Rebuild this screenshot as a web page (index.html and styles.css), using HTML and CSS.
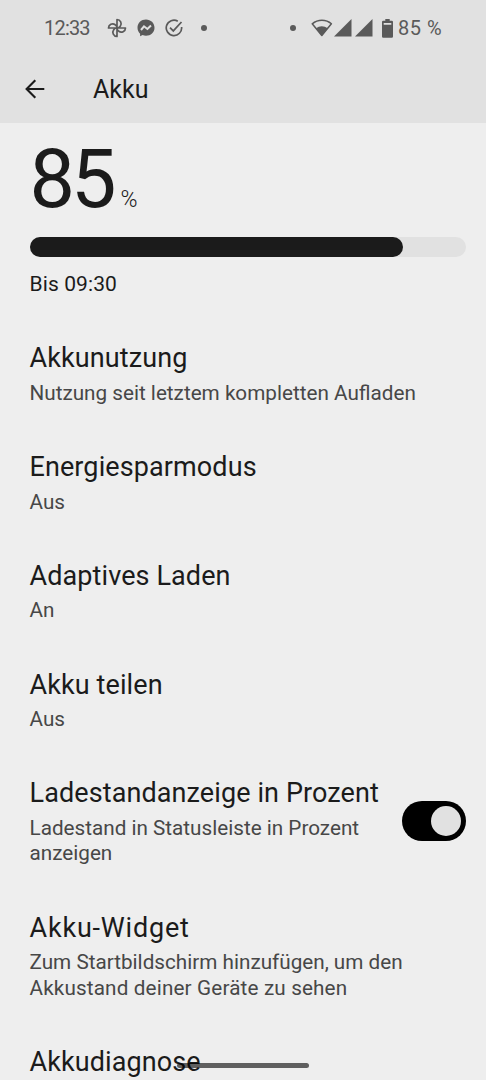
FILE: index.html
```html
<!DOCTYPE html>
<html lang="de">
<head>
  <meta charset="UTF-8">
  <meta name="viewport" content="width=device-width, initial-scale=1.0">
  <title>Akku</title>
  <link rel="stylesheet" href="styles.css">
</head>
<body>

<header class="top">
  <div class="statusbar">
    <span class="clock">12:33</span>
    <div class="notifications">
      <!-- Fotos -->
      <svg width="20" height="20" viewBox="0 0 20 20" fill="none" stroke="#5a5a5a" stroke-width="1.7" stroke-linejoin="round">
        <path d="M10 10V1.500A4.200 4.200 0 0 1 13.300 8.200Q12.300 10 10 10M10 10H18.500A4.200 4.200 0 0 1 11.800 13.300Q10 12.300 10 10M10 10V18.500A4.200 4.200 0 0 1 6.700 11.800Q7.700 10 10 10M10 10H1.500A4.200 4.200 0 0 1 8.200 6.700Q10 7.700 10 10"/>
      </svg>
      <!-- Messenger -->
      <svg width="18" height="18" viewBox="0 0 18 18">
        <path fill="#5a5a5a" d="M9 .5C4.200.5.500 4 .500 8.700c0 2.400 1 4.500 2.600 6v2.500l2.500-1.100c1 .4 2.200.600 3.400.600 4.800 0 8.500-3.400 8.500-8S13.800.5 9 .5z"/>
        <path fill="none" stroke="#e1e1e1" stroke-width="2" d="M4 11l3-3.700 3.400 2.700L14 6.500"/>
      </svg>
      <!-- Aufgaben -->
      <svg width="18" height="18" viewBox="0 0 18 18" fill="none" stroke="#5a5a5a" stroke-width="1.7">
        <path d="M12.800 2.200A7.700 7.700 0 1 0 16.600 8"/>
        <path d="M5 8.600l3.300 3.300L16.500 3"/>
      </svg>
    </div>
    <span class="dot dot-left"></span>
    <span class="dot dot-right"></span>
    <div class="signals">
      <svg class="wifi" width="22" height="18" viewBox="0 0 22 18">
        <path fill="none" stroke="#5a5a5a" stroke-width="1.500" stroke-linejoin="round" d="M1.200 4.800C7 .100 15 .100 20.400 4.800L10.800 16.500z"/>
        <path fill="#5a5a5a" d="M5 9.300C8.500 6.500 13 6.500 16.700 9.300L10.800 16.900z"/>
      </svg>
      <svg width="18" height="18" viewBox="0 0 18 18"><path fill="#5a5a5a" d="M0 17.500L17.500 0v17.500z"/></svg>
      <svg class="sim2" width="18" height="18" viewBox="0 0 18 18"><path fill="#5a5a5a" d="M0 17.500L17.500 0v17.500z"/></svg>
      <svg class="cell" width="11" height="19" viewBox="0 0 11 19">
        <path fill="#5a5a5a" fill-rule="evenodd" d="M3.300 0h4.400v1.800h2.100q1.200 0 1.200 1.200v14.500q0 1.200-1.200 1.200H1.200Q0 18.700 0 17.500V3q0-1.200 1.200-1.200h2.100zM1.700 4v1.800h7.600V4z"/>
      </svg>
    </div>
    <span class="level">85 %</span>
  </div>

  <div class="toolbar">
    <svg class="back" width="20" height="20" viewBox="0 0 20 20" fill="none" stroke="#1b1b1b" stroke-width="2.100">
      <path d="M10.300 1.200L1.600 10l8.700 8.800M1.800 10H19.300"/>
    </svg>
    <h1>Akku</h1>
  </div>
</header>

<main>
  <section class="battery">
    <div class="percent"><span class="number">85</span><span class="unit">%</span></div>
    <div class="bar"><div class="fill" style="width:85.5%"></div></div>
    <p class="until">Bis 09:30</p>
  </section>

  <section class="prefs">
    <div class="pref">
      <h2>Akkunutzung</h2>
      <p>Nutzung seit letztem kompletten Aufladen</p>
    </div>
    <div class="pref">
      <h2>Energiesparmodus</h2>
      <p>Aus</p>
    </div>
    <div class="pref">
      <h2>Adaptives Laden</h2>
      <p>An</p>
    </div>
    <div class="pref">
      <h2>Akku teilen</h2>
      <p>Aus</p>
    </div>
    <div class="pref with-switch">
      <div>
        <h2>Ladestandanzeige in Prozent</h2>
        <p>Ladestand in Statusleiste in Prozent<br>anzeigen</p>
      </div>
      <div class="switch"><div class="thumb"></div></div>
    </div>
    <div class="pref">
      <h2 class="wide">Akku-Widget</h2>
      <p>Zum Startbildschirm hinzufügen, um den<br><span class="loose">Akkustand deiner Geräte zu sehen</span></p>
    </div>
    <div class="pref">
      <h2>Akkudiagnose</h2>
    </div>
  </section>
</main>

<div class="home-bar"></div>

</body>
</html>
```
FILE: styles.css
```css
* { box-sizing: border-box; }
body {
  margin: 0;
  height: 1080px;
  overflow: hidden;
  background-color: #eeeeee;
  color: #1b1b1b;
  font-family: Roboto, "Liberation Sans", sans-serif;
}
h1, h2, p { margin: 0; font-weight: 400; }
svg { display: block; flex: none; }

.top {
  height: 123px;
  background-color: #e1e1e1;
}
.statusbar {
  display: flex;
  align-items: center;
  height: 56px;
  padding-left: 44px;
  color: #5a5a5a;
  font-size: 20px;
  white-space: nowrap;
}
.clock {
  width: 63px;
  letter-spacing: -0.8px;
}
.notifications {
  display: flex;
  align-items: center;
  gap: 10px;
}
.dot {
  width: 6px;
  height: 6px;
  border-radius: 50%;
  background-color: #5a5a5a;
}
.dot-left { margin-left: 18px; }
.dot-right { margin-left: 83px; }
.signals {
  display: flex;
  align-items: center;
  margin-left: 15px;
}
.wifi { margin-right: 1px; }
.sim2 { margin-left: 3px; }
.cell { margin-left: 9px; }
.level { margin-left: 5px; letter-spacing: 0.5px; }

.toolbar {
  display: flex;
  align-items: center;
  height: 66px;
  padding-left: 25px;
}
.toolbar h1 {
  margin-left: 48px;
  font-size: 25px;
}

.battery { padding: 16px 20px 0 29.5px; }
.percent {
  display: flex;
  align-items: baseline;
  height: 97.7px;
  line-height: 82px;
}
.number {
  font-size: 81px;
  letter-spacing: -4px;
}
.unit {
  margin-left: 8px;
  font-size: 23px;
  font-weight: 300;
}
.bar {
  height: 20px;
  border-radius: 10px;
  background-color: #e1e1e1;
}
.fill {
  height: 20px;
  border-radius: 10px;
  background-color: #1b1b1b;
}
.until {
  margin-top: 14px;
  font-size: 21px;
  line-height: 26px;
  letter-spacing: 0.1px;
}

.prefs {
  display: flex;
  flex-direction: column;
  gap: 42.8px;
  padding: 43.6px 20px 0 29.5px;
  white-space: nowrap;
}
.pref h2 {
  font-size: 27px;
  line-height: 36px;
  letter-spacing: 0.1px;
}
.pref p {
  margin-top: 4.500px;
  color: #474747;
  font-size: 20.700px;
  line-height: 25.500px;
}
.pref .wide { letter-spacing: 0.8px; }
.loose { letter-spacing: 0.15px; }
.with-switch {
  display: flex;
  align-items: center;
  justify-content: space-between;
}
.switch {
  display: flex;
  align-items: center;
  justify-content: flex-end;
  flex: none;
  width: 64px;
  height: 40px;
  padding-right: 5px;
  margin-top: -1px;
  border-radius: 20px;
  background-color: #000;
}
.thumb {
  width: 30px;
  height: 30px;
  border-radius: 50%;
  background-color: #e1e1e1;
}

.home-bar {
  position: absolute;
  left: 177px;
  top: 1063px;
  width: 132px;
  height: 5px;
  border-radius: 3px;
  background-color: rgba(0, 0, 0, 0.6);
}
```
